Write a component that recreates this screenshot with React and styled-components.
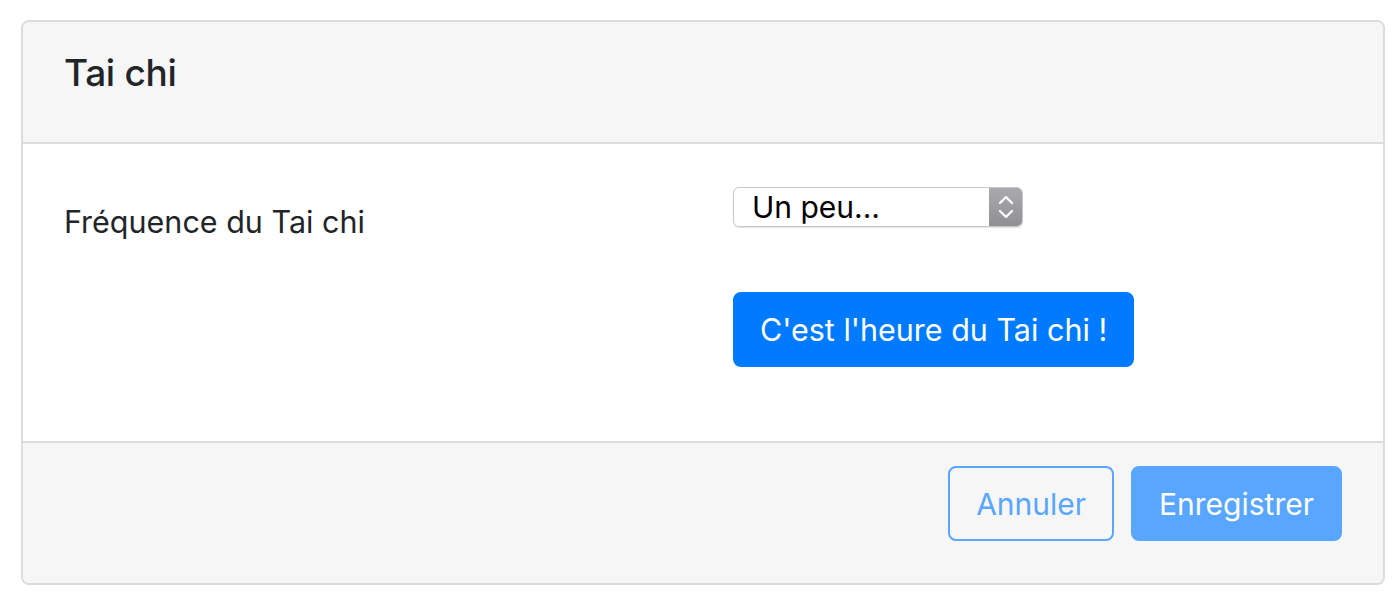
import React from "react";
import styled, { createGlobalStyle } from "styled-components";

const GlobalStyle = createGlobalStyle`
  body {
    margin: 0;
    background: #fff;
    font-family: Inter, "Helvetica Neue", Arial, sans-serif;
    color: #212529;
  }
`;

const Card = styled.div`
  margin: 20px 0 0 21px;
  width: 1364px;
  box-sizing: border-box;
  border: 2px solid #dcdcdc;
  border-radius: 8px;
  overflow: hidden;
`;

const Header = styled.div`
  background: #f6f6f6;
  height: 122px;
  box-sizing: border-box;
  border-bottom: 2px solid #dcdcdc;
  padding: 29px 41px 0;
`;

const Title = styled.h5`
  margin: 0;
  font-size: 37px;
  line-height: 44px;
  font-weight: 500;
  color: #212529;
  letter-spacing: -0.3px;
`;

const Body = styled.div`
  background: #fff;
  padding: 43px 41px 74px;
  display: grid;
  grid-template-columns: 669px 1fr;
  align-items: start;
`;

const Label = styled.div`
  font-size: 30.5px;
  line-height: 40px;
  color: #212529;
  padding-top: 15px;
`;

const Controls = styled.div`
  display: flex;
  flex-direction: column;
  align-items: flex-start;
  gap: 65px;
`;

const Select = styled.div`
  width: 290px;
  height: 40px;
  box-sizing: border-box;
  border: 1px solid #c8c8c8;
  border-radius: 6px;
  display: flex;
  align-items: stretch;
  overflow: hidden;
  box-shadow: 0 1px 1px rgba(0, 0, 0, 0.12);
`;

const SelectValue = styled.div`
  flex: 1;
  display: flex;
  align-items: center;
  padding-left: 18px;
  font-size: 30px;
  color: #000;
`;

const SelectArrows = styled.div`
  width: 33px;
  background: linear-gradient(#a9a9ae, #8f8f94);
  display: flex;
  align-items: center;
  justify-content: center;
`;

const Button = styled.button`
  font-family: inherit;
  font-size: ${(p) => p.$size || 30.5}px;
  height: 75px;
  box-sizing: border-box;
  border-radius: 8px;
  padding: 0 ${(p) => p.$px || 25}px;
  border: 2px solid ${(p) => p.$color};
  background: ${(p) => (p.$outline ? "transparent" : p.$color)};
  color: ${(p) => (p.$outline ? p.$color : "#fff")};
  cursor: pointer;
`;

const Footer = styled.div`
  background: #f6f6f6;
  border-top: 2px solid #dcdcdc;
  height: 142px;
  box-sizing: border-box;
  display: flex;
  justify-content: flex-end;
  align-items: flex-start;
  gap: 17px;
  padding: 23px 41px 0;
`;

export default function App() {
  return (
    <>
      <GlobalStyle />
      <Card>
        <Header>
          <Title>Tai chi</Title>
        </Header>
        <Body>
          <Label>Fréquence du Tai chi</Label>
          <Controls>
            <Select>
              <SelectValue>Un peu...</SelectValue>
              <SelectArrows>
                <svg width="18" height="28" viewBox="0 0 18 28" fill="none" stroke="#fff" strokeWidth="2.4" strokeLinecap="round" strokeLinejoin="round">
                  <path d="M3 10 L9 4 L15 10" />
                  <path d="M3 18 L9 24 L15 18" />
                </svg>
              </SelectArrows>
            </Select>
            <Button $color="#007bff">C'est l'heure du Tai chi !</Button>
          </Controls>
        </Body>
        <Footer>
          <Button $outline $color="#58a6ff" $size={30} $px={26}>Annuler</Button>
          <Button $color="#58a6ff" $size={30} $px={26}>Enregistrer</Button>
        </Footer>
      </Card>
    </>
  );
}
